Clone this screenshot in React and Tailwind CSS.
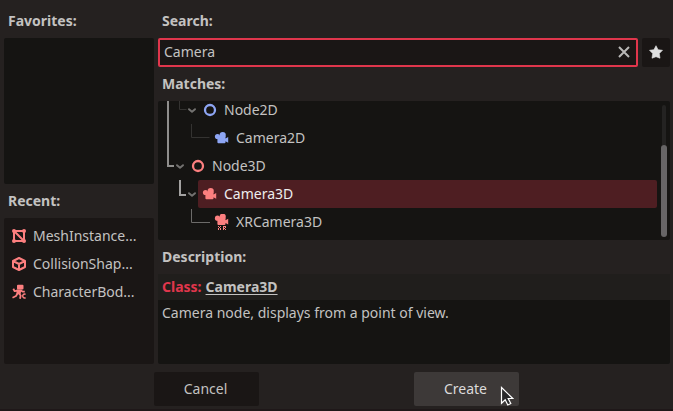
const SALMON = '#fc7f7f';
const BLUE = '#8da5f3';

function CameraIcon({ color, xr }) {
  return (
    <svg width="16" height="16" viewBox="0 0 16 16" fill={color} className="shrink-0">
      <g transform={xr ? 'translate(0 -2.300)' : undefined}>
        <circle cx="8.700" cy="5" r="3.100" />
        <circle cx="3.500" cy="6.500" r="2.600" />
        <path d="M3 6h8.500v2.600L14.200 7v5.800l-2.700-1.600v1.100a1 1 0 0 1-1 1H4.400a1 1 0 0 1-1-1V9z" />
      </g>
      {xr && (
        <g fill={color} shapeRendering="crispEdges">
          <path d="M4 12h1v1H4zM6 12h1v1H6zM5 13h1v1H5zM4 14h1v2H4zM6 14h1v2H6z" />
          <path d="M9 12h3v1H9zM9 13h1v3H9zM11 13h1v1h-1zM10 14h1v1h-1zM11 15h1v1h-1z" />
        </g>
      )}
    </svg>
  );
}

function RingIcon({ color }) {
  return (
    <svg width="16" height="16" viewBox="0 0 16 16" className="shrink-0">
      <circle cx="8" cy="8" r="5" fill="none" stroke={color} strokeWidth="2.300" />
    </svg>
  );
}

function MeshIcon() {
  return (
    <svg width="16" height="16" viewBox="0 0 16 16" className="shrink-0" fill={SALMON}>
      <path d="M3 3h10v10H3zM3 3l10 10" fill="none" stroke={SALMON} strokeWidth="2" />
      <circle cx="3" cy="3" r="2" />
      <circle cx="13" cy="3" r="2" />
      <circle cx="3" cy="13" r="2" />
      <circle cx="13" cy="13" r="2" />
    </svg>
  );
}

function CollisionIcon() {
  return (
    <svg width="16" height="16" viewBox="0 0 16 16" className="shrink-0" fill="none" stroke={SALMON} strokeWidth="2" strokeLinejoin="round">
      <path d="M8 2l6 3v6l-6 3-6-3V5zM2 5l6 3 6-3M8 8v6" />
    </svg>
  );
}

function CharacterIcon() {
  return (
    <svg width="16" height="16" viewBox="0 0 16 16" className="shrink-0" fill="none" stroke={SALMON} strokeWidth="2" strokeLinejoin="round">
      <path d="M7 .8h4.500q1 0 1 1v2.700q0 1-1 1H7q-1 0-1-1V1.800q0-1 1-1z" fill={SALMON} stroke="none" />
      <path d="M5.500 5.500h5L9.500 10.500l-4-.5z" fill={SALMON} stroke="none" />
      <path d="M7 6.600L3.700 7.200 2.300 4.800M9.500 6.300l2 1.300h2.300M6.500 9.500L5 12l-3.500 1.700M8.200 9.800l1.500 1.700-.7 3.300" strokeWidth="1.800" />
      <path d="M14.600 10.400a1.900 1.900 0 1 0 0 3.200" strokeWidth="1.400" />
    </svg>
  );
}

function Chevron() {
  return (
    <svg width="12" height="16" viewBox="0 0 12 16" className="shrink-0" fill="none" stroke="#737270" strokeWidth="2" strokeLinecap="round" strokeLinejoin="round">
      <path d="M3 7.200l3 2.500 3-2.500" />
    </svg>
  );
}

function Heading({ children, className }) {
  return <h2 className={`flex items-center px-1 font-bold ${className}`}>{children}</h2>;
}

function RecentItem({ icon, label }) {
  return (
    <li className="flex h-7 items-center gap-[6px] pl-[7px]">
      {icon}
      <span>{label}</span>
    </li>
  );
}

function TreeRow({ indent, open, icon, label, selected }) {
  return (
    <div className={`flex h-7 shrink-0 items-center ${indent}`}>
      {open && <Chevron />}
      <div className={`flex h-7 flex-1 items-center gap-[6px] rounded-[2px] pl-1 ${selected ? 'bg-[#4e1e22] text-[#ededed]' : ''}`}>
        {icon}
        <span>{label}</span>
      </div>
    </div>
  );
}

function TreeGuides() {
  return (
    <svg width="60" height="139" className="absolute left-0 top-0" fill="none">
      <path d="M10 0v65h6" stroke="#8f8e8c" strokeWidth="2" />
      <path d="M22 79v15h6" stroke="#a3a2a1" strokeWidth="2" />
      <path d="M21.500 0v8.500h7" stroke="#343331" />
      <path d="M33.500 23v13.500h18" stroke="#343331" />
      <path d="M33.500 108v13.500H52" stroke="#6c6b69" />
    </svg>
  );
}

export default function App() {
  return (
    <div className="flex h-[411px] w-[673px] flex-col overflow-hidden border-b-2 border-[#1f1819] bg-[#252120] font-['Noto_Sans',sans-serif] text-[14px] leading-5 text-[#c3c2c1]">
      <div className="flex h-[364px] shrink-0 gap-1 pl-1 pr-[3px]">
        <aside className="flex w-[150px] flex-col">
          <Heading className="h-[38px] pt-[3px]">Favorites:</Heading>
          <div className="h-[146px] rounded-[2px] bg-[#151412]" />
          <Heading className="h-[34px]">Recent:</Heading>
          <ul className="h-[146px] rounded-[2px] bg-[#1a1615] pt-1">
            <RecentItem icon={<MeshIcon />} label="MeshInstance..." />
            <RecentItem icon={<CollisionIcon />} label="CollisionShap..." />
            <RecentItem icon={<CharacterIcon />} label="CharacterBod..." />
          </ul>
        </aside>

        <main className="flex min-w-0 flex-1 flex-col">
          <Heading className="h-[38px] pt-[3px]">Search:</Heading>
          <div className="flex h-[29px] gap-1">
            <div className="flex w-[480px] items-center justify-between rounded-[2px] border-2 border-[#e0364c] bg-[#1a1615] pl-1 pr-1">
              <span className="pb-px">Camera</span>
              <svg width="16" height="16" viewBox="0 0 16 16" className="mb-px" stroke="#b9b8b7" strokeWidth="2">
                <path d="M3 3l10 10M13 3L3 13" />
              </svg>
            </div>
            <div className="flex w-7 items-center justify-center rounded-[2px] bg-[#1a1615]">
              <svg width="16" height="16" viewBox="0 0 16 16" className="mb-px" fill="#e0e0e0" stroke="#e0e0e0" strokeWidth=".6" strokeLinejoin="round">
                <path d="M8 1.700l2.100 4 4.400.6-3.200 3.200.7 4.700L8 12.700l-4 1.500.7-4.700L1.500 6.300l4.400-.6z" />
              </svg>
            </div>
          </div>
          <Heading className="h-[34px]">Matches:</Heading>
          <div className="relative flex h-[139px] overflow-hidden rounded-[2px] bg-[#151412]">
            <div className="-mt-[5px] flex w-[499px] flex-col">
              <TreeRow indent="pl-7" open icon={<RingIcon color={BLUE} />} label="Node2D" />
              <TreeRow indent="pl-[52px]" icon={<CameraIcon color={BLUE} />} label="Camera2D" />
              <TreeRow indent="pl-4" open icon={<RingIcon color={SALMON} />} label="Node3D" />
              <TreeRow indent="pl-7" open selected icon={<CameraIcon color={SALMON} />} label="Camera3D" />
              <TreeRow indent="pl-[52px]" icon={<CameraIcon color={SALMON} xr />} label="XRCamera3D" />
            </div>
            <TreeGuides />
            <div className="ml-1 mt-1 flex h-[132px] w-[6px] flex-col items-center">
              <div className="h-10 w-1 rounded-t-[2px] bg-[#242322]" />
              <div className="h-[92px] w-[6px] rounded-[3px] bg-[#676566]" />
            </div>
          </div>
          <Heading className="h-[34px]">Description:</Heading>
          <div className="flex h-[26px] items-center gap-1 bg-[#201e1c] px-1 font-bold">
            <span className="text-[#e0364c]">Class:</span>
            <span className="underline decoration-1 underline-offset-2">Camera3D</span>
          </div>
          <p className="flex-1 rounded-b-[2px] bg-[#151412] px-1 pt-[3px]">Camera node, displays from a point of view.</p>
        </main>
      </div>

      <footer className="mt-2 flex h-[34px] gap-[155px] pl-[154px]">
        <button className="w-[105px] rounded-[2px] bg-[#1a1615] pr-[2px]">Cancel</button>
        <button className="relative w-[105px] rounded-[2px] bg-[#3d3938] pr-[2px] text-[#dcdbdb]">
          Create
          <svg width="14" height="20" viewBox="0 0 14 20" className="absolute left-[86px] top-[14px]">
            <path d="M1.500 1.500v15.800l3.700-3.500 2.600 5.200 3-1.500-2.600-5h4.600z" fill="#28282a" stroke="#fff" strokeWidth="1.200" />
          </svg>
        </button>
      </footer>
    </div>
  );
}
